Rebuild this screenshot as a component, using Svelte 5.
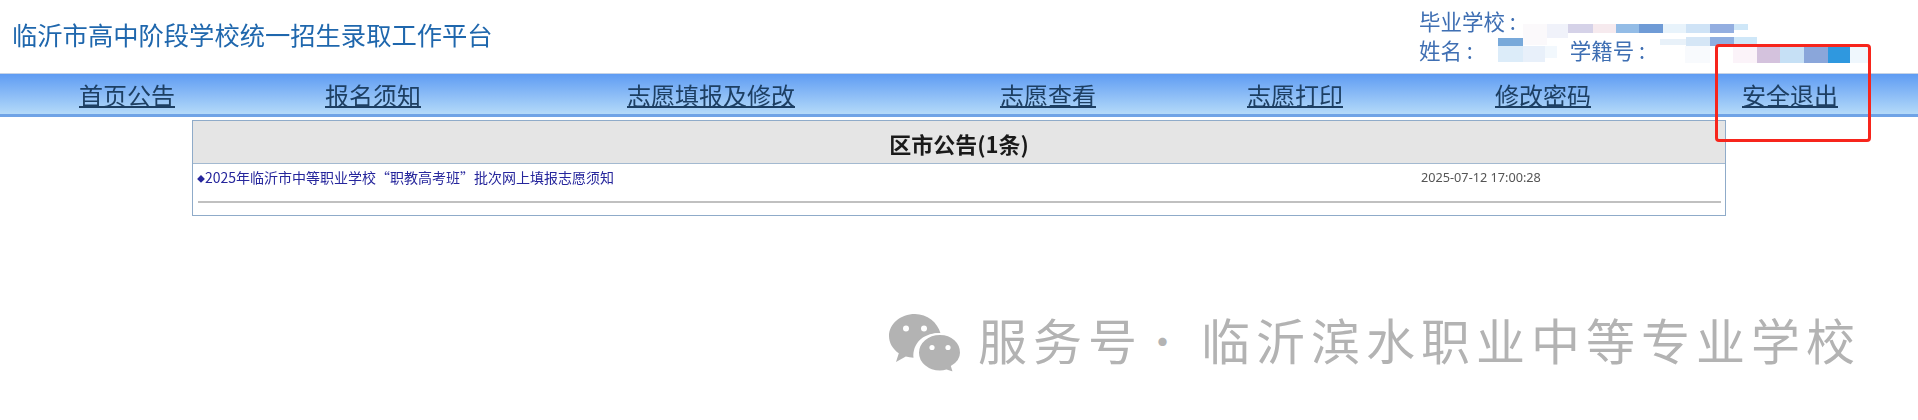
<script>
  const navItems = [
    '首页公告', '报名须知', '志愿填报及修改', '志愿查看', '志愿打印', '修改密码', '安全退出'
  ];
  const mosaic = [
    [1523, 24, 24, 21, '#fbf9fb'], [1547, 24, 21, 14, '#f0f2fa'], [1568, 24, 25, 9, '#d5d2e8'],
    [1593, 24, 23, 9, '#f6eaee'], [1616, 24, 23, 9, '#93bce6'], [1639, 24, 24, 9, '#6f9bd6'],
    [1663, 24, 23, 9, '#e8f3fb'], [1686, 24, 24, 9, '#cfe3f6'], [1710, 24, 24, 9, '#93aee0'],
    [1734, 24, 14, 6, '#cfe7f8'],
    [1498, 38, 25, 8, '#78a9da'], [1498, 46, 25, 16, '#dcecf9'], [1523, 46, 22, 16, '#e8f0fa'],
    [1545, 46, 12, 12, '#f2f8fd'],
    [1660, 39, 26, 6, '#e8f1f9'], [1686, 37, 24, 9, '#d5e6f6'], [1710, 37, 24, 9, '#8faee0'],
    [1734, 37, 23, 9, '#cfe7f8'],
    [1685, 46, 25, 17, '#f8fafd'], [1733, 46, 24, 17, '#fbf3f9'], [1757, 46, 23, 17, '#d4c2dd'],
    [1780, 46, 24, 17, '#c6e0f5'], [1804, 46, 24, 17, '#8aa6da'], [1828, 46, 22, 17, '#2f98df'],
    [1850, 46, 20, 17, '#eff7fd']
  ];
</script>

<div class="page">
  <header class="top">
    <h1>临沂市高中阶段学校统一招生录取工作平台</h1>
    <div class="user">
      <div>毕业学校 :</div>
      <div class="line"><span>姓名 :</span><span class="num">学籍号 :</span></div>
    </div>
  </header>

  <nav>
    {#each navItems as item}
      <a href="#top">{item}</a>
    {/each}
  </nav>

  <section class="board">
    <h2>区市公告(1条)</h2>
    <div class="row">
      <a href="#top"><span class="dot">◆</span>2025年临沂市中等职业学校“职教高考班”批次网上填报志愿须知</a>
      <time>2025-07-12 17:00:28</time>
    </div>
    <hr />
  </section>

  <footer class="mark">
    <svg viewBox="0 0 74 60" width="74" height="60" aria-hidden="true">
      <path fill="#b3b3b3" d="M27 1C12.500 1 1 10.800 1 23c0 7 3.800 13.200 9.800 17.300L8 49l9.800-5.400c2.500.7 5 1.100 7.700 1.200C24.200 30 36 19 52.500 20.300 49.500 9.300 39.200 1 27 1z"/>
      <circle cx="18" cy="15.500" r="3" fill="#fff"/>
      <circle cx="36" cy="15.500" r="3" fill="#fff"/>
      <path fill="#b3b3b3" stroke="#fff" stroke-width="2" d="M52 21c-12.200 0-22 8.300-22 18.700S39.800 58.400 52 58.400c2.300 0 4.500-.3 6.600-.9l7.400 2.500-2-6.600c5.500-3.400 9-8 9-13.700C73 29.300 64.200 21 52 21z"/>
      <circle cx="44" cy="34.500" r="2.600" fill="#fff"/>
      <circle cx="60" cy="34.500" r="2.600" fill="#fff"/>
    </svg>
    <span class="slogan">服务号<span class="sep">·</span>临沂滨水职业中等专业学校</span>
  </footer>

  {#each mosaic as [x, y, w, h, c]}
    <i class="tile" style="left:{x}px;top:{y}px;width:{w}px;height:{h}px;background:{c}"></i>
  {/each}
  <div class="callout"></div>
</div>

<style>
  :global(body) {
    margin: 0;
    background: #fff;
  }
  .page {
    position: relative;
    width: 1918px;
    height: 420px;
    overflow: hidden;
    font-family: "Noto Sans CJK SC", "Liberation Sans", sans-serif;
  }
  .top {
    display: flex;
    justify-content: space-between;
    height: 73px;
    padding: 0 0 0 12px;
    box-sizing: border-box;
    filter: blur(0.4px);
  }
  h1 {
    margin: 16px 0 0;
    font-size: 25.300px;
    line-height: 36px;
    font-weight: 400;
    color: #1f67ad;
  }
  .user {
    width: 499px;
    padding-top: 6px;
    font-size: 21.500px;
    line-height: 29px;
    color: #3f6fb3;
  }
  .line {
    display: flex;
  }
  .num {
    margin-left: 97px;
  }
  nav {
    display: grid;
    grid-template-columns: 246px 246px 430px 244px 250px 246px 248px;
    height: 40px;
    padding-left: 4px;
    border-top: 1px solid #c6d3e6;
    border-bottom: 3px solid #6fa3e6;
    background: linear-gradient(#5f9cf3, #b4daf9);
    filter: blur(0.4px);
  }
  nav a {
    justify-self: center;
    font-size: 24px;
    line-height: 41px;
    height: 36px;
    color: #1d3f63;
    text-decoration: underline;
    text-underline-offset: 1px;
  }
  .board {
    box-sizing: border-box;
    width: 1534px;
    height: 96px;
    margin: 3px 0 0 192px;
    border: 1px solid #8fabc9;
    filter: blur(0.3px);
  }
  h2 {
    margin: 0;
    height: 42px;
    font-size: 22px;
    line-height: 44px;
    text-align: center;
    color: #1a1a1a;
    background: #e5e5e5;
    border-bottom: 1px solid #a3b9d0;
  }
  .row {
    display: flex;
    justify-content: space-between;
    height: 37px;
    padding-left: 4px;
    font-size: 14px;
    line-height: 26px;
  }
  .row a {
    color: #26269c;
    text-decoration: none;
  }
  .dot {
    font-size: 8px;
    vertical-align: 1px;
  }
  time {
    width: 304px;
    font-family: "Noto Sans", sans-serif;
    font-size: 12.700px;
    color: #555;
  }
  hr {
    margin: 0 4px 0 5px;
    border: 0;
    border-top: 2px solid #c0c0c0;
  }
  .mark {
    display: flex;
    align-items: center;
    gap: 16px;
    margin: 93px 0 0 888px;
    font-size: 49px;
    line-height: 60px;
    letter-spacing: 6px;
    color: #b3b3b3;
    white-space: nowrap;
  }
  .slogan {
    margin-bottom: 8px;
  }
  .sep {
    display: inline-block;
    width: 58px;
    font-size: 39px;
    line-height: 1;
    vertical-align: 4px;
    letter-spacing: 0;
  }
  .tile {
    position: absolute;
    filter: blur(0.6px);
  }
  .callout {
    position: absolute;
    left: 1715px;
    top: 44px;
    width: 156px;
    height: 98px;
    box-sizing: border-box;
    border: 3px solid #f7251c;
    border-radius: 4px;
  }
</style>
